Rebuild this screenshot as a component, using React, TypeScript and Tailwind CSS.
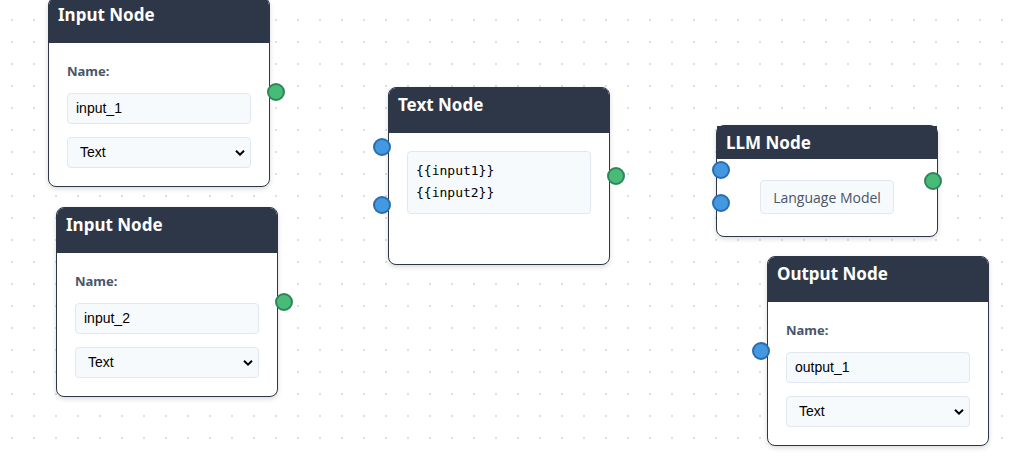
import type { ReactNode } from "react";

type HandleKind = "target" | "source";

function Handle({ kind, className }: { kind: HandleKind; className: string }) {
  const color =
    kind === "target"
      ? "border-[#2b6cb0] bg-[#4299e1]"
      : "border-[#2f855a] bg-[#48bb78]";
  return (
    <span
      className={`absolute size-[18px] -translate-y-1/2 rounded-full border-2 ${color} ${className}`}
    />
  );
}

function NodeCard({
  title,
  position,
  header = "h-[45px] rounded-t-[7px]",
  handles,
  children,
}: {
  title: string;
  position: string;
  header?: string;
  handles: ReactNode;
  children: ReactNode;
}) {
  return (
    <section
      className={`absolute w-[222px] rounded-lg border border-[#2d3748] bg-white shadow-[0_2px_5px_rgba(0,0,0,0.15)] ${position}`}
    >
      <header className={`bg-[#2d3748] px-[9px] pt-[5px] ${header}`}>
        <h2 className="text-[17px] leading-6 font-bold text-white">{title}</h2>
      </header>
      {children}
      {handles}
    </section>
  );
}

const field =
  "block h-[31px] w-full rounded border border-[#e2e8f0] bg-[#f7fafc] font-['Liberation_Sans',sans-serif] text-[14px] text-black";

function NamedFields({ id, name }: { id: string; name: string }) {
  return (
    <div className="p-[18px]">
      <label
        htmlFor={`${id}-name`}
        className="mb-[11px] block text-[13px] leading-[21px] font-bold text-[#4a5568]"
      >
        Name:
      </label>
      <input
        id={`${id}-name`}
        className={`px-2 pb-0.5 ${field}`}
        defaultValue={name}
      />
      <div className="relative mt-[13px]">
        <select
          aria-label="Type"
          className={`appearance-none pr-6 pl-3 ${field}`}
          defaultValue="Text"
        >
          <option>Text</option>
          <option>File</option>
        </select>
        <svg
          viewBox="0 0 10 6"
          className="pointer-events-none absolute top-[13px] right-1.5 h-[6px] w-[10px]"
          fill="none"
          stroke="black"
          strokeWidth="2"
          aria-hidden="true"
        >
          <path d="M1 0.8 5 4.6 9 0.8" />
        </svg>
      </div>
    </div>
  );
}

export default function App() {
  return (
    <main className="relative h-screen w-full overflow-hidden bg-white bg-[radial-gradient(circle_at_12px_20px,#dedede_1px,transparent_1px)] bg-[size:22px_22px] font-['Noto_Sans','Open_Sans',sans-serif]">
      <NodeCard
        title="Input Node"
        position="left-[48px] -top-[3px]"
        handles={<Handle kind="source" className="top-1/2 -right-4" />}
      >
        <NamedFields id="input-1" name="input_1" />
      </NodeCard>

      <NodeCard
        title="Input Node"
        position="left-[56px] top-[207px]"
        handles={<Handle kind="source" className="top-1/2 -right-4" />}
      >
        <NamedFields id="input-2" name="input_2" />
      </NodeCard>

      <NodeCard
        title="Text Node"
        position="left-[388px] top-[87px]"
        handles={
          <>
            <Handle kind="target" className="top-1/3 -left-4" />
            <Handle kind="target" className="top-2/3 -left-4" />
            <Handle kind="source" className="top-1/2 -right-4" />
          </>
        }
      >
        <div className="px-[18px] pt-[18px] pb-[50px]">
          <textarea
            aria-label="Text"
            className="block h-[63px] w-full resize-none overflow-hidden rounded border border-[#e2e8f0] bg-[#f7fafc] p-2 font-['DejaVu_Sans_Mono',monospace] text-[13px] leading-[22px] text-black"
            defaultValue={"{{input1}}\n{{input2}}"}
          />
        </div>
      </NodeCard>

      <NodeCard
        title="LLM Node"
        position="left-[716px] top-[125px]"
        header="h-[33px]"
        handles={
          <>
            <Handle kind="target" className="top-[40%] -left-[5px]" />
            <Handle kind="target" className="top-[70%] -left-[5px]" />
            <Handle kind="source" className="top-1/2 -right-[5px]" />
          </>
        }
      >
        <div className="flex justify-center pt-[21px] pb-[22px]">
          <p className="rounded border border-[#e2e8f0] bg-[#f7fafc] px-3 pt-1.5 pb-1 font-['Open_Sans',sans-serif] text-[14px] leading-[22px] text-[#4a5568]">
            Language Model
          </p>
        </div>
      </NodeCard>

      <NodeCard
        title="Output Node"
        position="left-[767px] top-[256px]"
        handles={<Handle kind="target" className="top-1/2 -left-4" />}
      >
        <NamedFields id="output-1" name="output_1" />
      </NodeCard>
    </main>
  );
}
